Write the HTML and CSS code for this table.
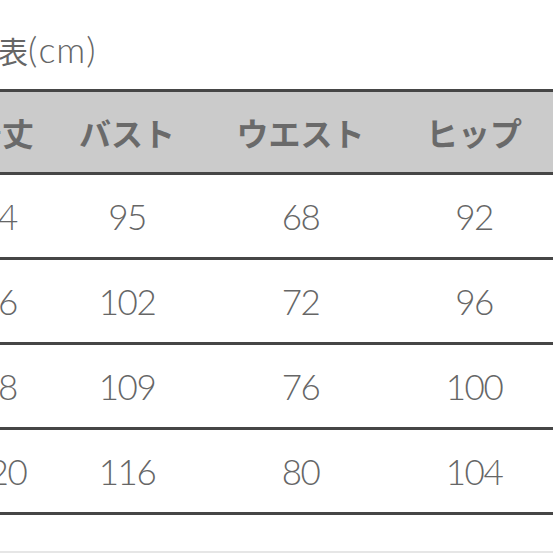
FILE: index.html
```html
<!DOCTYPE html>
<html lang="ja">
<head>
<meta charset="utf-8">
<link rel="stylesheet" href="styles.css">
</head>
<body>
<div class="page">
  <div class="title-bar"><h1 class="title">サイズ表<span class="unit">(cm)</span></h1></div>
  <div class="chart">
    <div class="row head"><div>着丈</div><div>バスト</div><div>ウエスト</div><div>ヒップ</div></div>
    <div class="row"><div>64</div><div>95</div><div>68</div><div>92</div></div>
    <div class="row"><div>66</div><div>102</div><div>72</div><div>96</div></div>
    <div class="row"><div>68</div><div>109</div><div>76</div><div>100</div></div>
    <div class="row"><div>120</div><div>116</div><div>80</div><div>104</div></div>
  </div>
</div>
</body>
</html>
```
FILE: styles.css
```css
html, body {
  margin: 0;
  padding: 0;
  background: #ffffff;
  overflow: hidden;
}
.page {
  width: 553px;
  height: 553px;
  overflow: hidden;
  border-bottom: 2px solid #e6e6e6;
  box-sizing: border-box;
}
.title-bar {
  height: 89px;
  display: flex;
  align-items: flex-start;
}
.title {
  margin: 28px 0 0 -91px;
  font-family: "Noto Sans CJK JP", "Noto Sans", sans-serif;
  font-weight: 400;
  font-size: 30px;
  line-height: 42px;
  color: #666666;
  white-space: nowrap;
}
.unit {
  font-family: "Lato", "Noto Sans", sans-serif;
  font-weight: 300;
  font-size: 36px;
  letter-spacing: 1px;
}
.chart {
  width: 553px;
}
.row {
  display: grid;
  grid-template-columns: 76px 174px 173px 174px;
  margin-left: -36px;
  height: 82px;
  align-items: center;
  justify-items: center;
  border-bottom: 3px solid #464646;
  font-family: "Lato", "Noto Sans", sans-serif;
  font-weight: 300;
  font-size: 35px;
  letter-spacing: -1.5px;
  color: #666666;
}
.row > div {
  white-space: nowrap;
}
.row:not(.head) > div:first-child {
  padding-right: 8px;
}
.row.head {
  height: 80px;
  border-top: 3px solid #464646;
  background: #cbcbcb;
  font-family: "Noto Sans CJK JP", sans-serif;
  font-weight: 700;
  font-size: 32px;
  letter-spacing: 0;
  color: #6a6a6a;
}
```
